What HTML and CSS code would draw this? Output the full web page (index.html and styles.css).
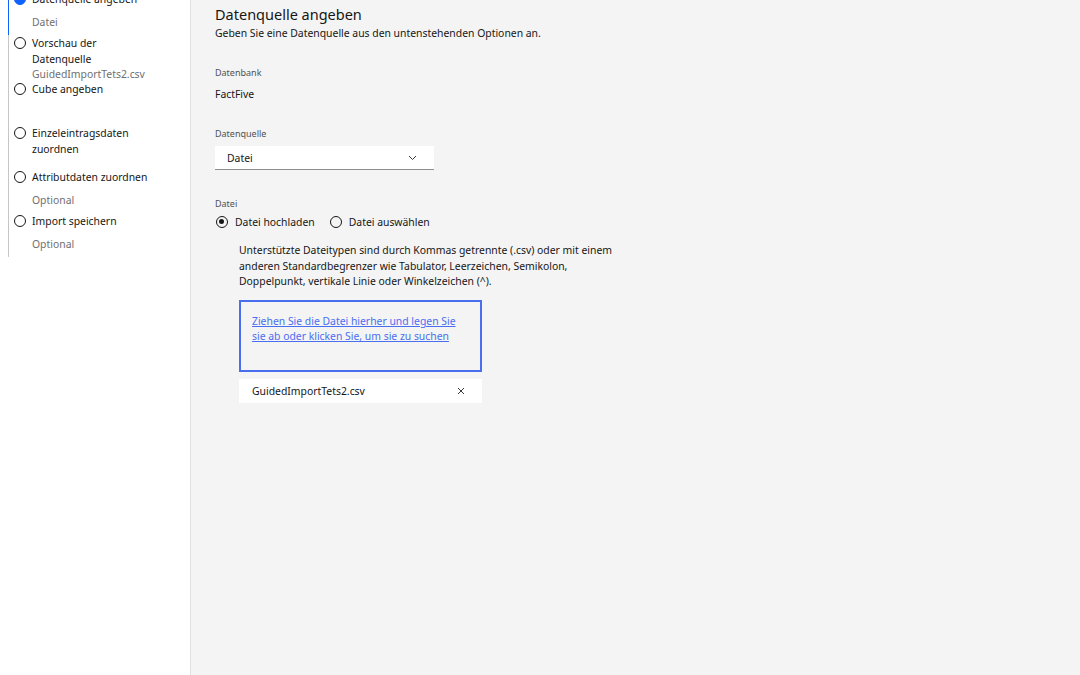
FILE: index.html
```html
<!DOCTYPE html>
<html lang="de">
<head>
<meta charset="utf-8">
<title>Datenquelle angeben</title>
<link rel="stylesheet" href="styles.css">
</head>
<body>
<div class="app">
  <aside class="sidebar">
    <ol class="steps">
      <li class="step step--current">
        <span class="step__icon"></span>
        <div class="step__text">
          <div class="step__label">Datenquelle angeben</div>
          <div class="step__sub">Datei</div>
        </div>
      </li>
      <li class="step">
        <span class="step__icon"></span>
        <div class="step__text">
          <div class="step__label">Vorschau der<br>Datenquelle</div>
          <div class="step__sub step__sub--tight">GuidedImportTets2.csv</div>
        </div>
      </li>
      <li class="step">
        <span class="step__icon"></span>
        <div class="step__text">
          <div class="step__label">Cube angeben</div>
        </div>
      </li>
      <li class="step">
        <span class="step__icon"></span>
        <div class="step__text">
          <div class="step__label">Einzeleintragsdaten<br>zuordnen</div>
        </div>
      </li>
      <li class="step">
        <span class="step__icon"></span>
        <div class="step__text">
          <div class="step__label">Attributdaten zuordnen</div>
          <div class="step__sub">Optional</div>
        </div>
      </li>
      <li class="step">
        <span class="step__icon"></span>
        <div class="step__text">
          <div class="step__label">Import speichern</div>
          <div class="step__sub">Optional</div>
        </div>
      </li>
    </ol>
  </aside>
  <main class="main">
    <h1 class="title">Datenquelle angeben</h1>
    <p class="subtitle">Geben Sie eine Datenquelle aus den untenstehenden Optionen an.</p>

    <div class="field field--first">
      <div class="field__label">Datenbank</div>
      <div class="field__value">FactFive</div>
    </div>

    <div class="field">
      <div class="field__label">Datenquelle</div>
      <div class="select">
        <span>Datei</span>
        <svg class="select__chevron" width="9" height="6" viewBox="0 0 9 6"><path d="M1 1 L4.5 4.5 L8 1" fill="none" stroke="#393939" stroke-width="1"/></svg>
      </div>
    </div>

    <div class="field field--file">
      <div class="field__label">Datei</div>
      <div class="radios">
        <label class="radio radio--checked"><span class="radio__circle"></span>Datei hochladen</label>
        <label class="radio"><span class="radio__circle"></span>Datei auswählen</label>
      </div>
      <div class="upload">
        <p class="upload__desc">Unterstützte Dateitypen sind durch Kommas getrennte (.csv) oder mit einem anderen Standardbegrenzer wie Tabulator, Leerzeichen, Semikolon, Doppelpunkt, vertikale Linie oder Winkelzeichen (^).</p>
        <div class="dropzone">
          <a class="dropzone__link" href="#">Ziehen Sie die Datei hierher und legen Sie sie ab oder klicken Sie, um sie zu suchen</a>
        </div>
        <div class="file-item">
          <span>GuidedImportTets2.csv</span>
          <svg class="file-item__close" width="8" height="8" viewBox="0 0 8 8"><path d="M1 1 L7 7 M7 1 L1 7" stroke="#393939" stroke-width="1"/></svg>
        </div>
      </div>
    </div>
  </main>
</div>
</body>
</html>
```

FILE: styles.css
```css
* { box-sizing: border-box; }
html, body { margin: 0; padding: 0; height: 100%; }
body {
  font-family: "Noto Sans", "Open Sans", sans-serif;
  font-size: 10.4px;
  color: #161616;
  background: #f4f4f4;
  overflow: hidden;
}
.app {
  display: flex;
  height: 675px;
}
.sidebar {
  width: 191px;
  flex: none;
  background: #ffffff;
  border-right: 1px solid #e0e0e0;
}
.steps {
  list-style: none;
  margin: -9px 0 0 8px;
  padding: 0;
}
.step {
  display: flex;
  min-height: 44px;
  border-left: 1px solid #c6c6c6;
  padding-left: 5px;
}
.step--current { border-left-color: #0f62fe; }
.step__icon {
  width: 12px;
  height: 12px;
  border: 1.3px solid #161616;
  border-radius: 50%;
  margin-top: 2px;
  flex: none;
}
.step--current .step__icon {
  background: #0f62fe;
  border-color: #0f62fe;
}
.step__text {
  margin-left: 6px;
}
.step__label {
  line-height: 16px;
  color: #161616;
}
.step__sub {
  line-height: 16px;
  color: #6f6f6f;
  margin-top: 7px;
}
.step__sub--tight {
  margin-top: 0;
  line-height: 14px;
}

.main {
  flex: 1;
  padding: 4px 24px 0 24px;
}
.title {
  font-size: 14.5px;
  font-weight: 400;
  line-height: 20px;
  margin: 0;
}
.subtitle {
  margin: 1px 0 0;
  line-height: 16px;
}
.field { margin-top: 24px; }
.field--first { margin-top: 24px; }
.field--file { margin-top: 26px; }
.field__label {
  font-size: 9px;
  line-height: 16px;
  color: #525252;
}
.field__value {
  margin-top: 5px;
  line-height: 16px;
}
.select {
  margin-top: 4px;
  width: 219px;
  height: 24px;
  background: #ffffff;
  border-bottom: 1px solid #8d8d8d;
  display: flex;
  align-items: center;
  justify-content: space-between;
  padding: 0 17px 0 12px;
}
.select__chevron { display: block; }
.radios {
  margin-top: 2px;
  display: flex;
  gap: 14px;
  line-height: 16px;
}
.radio {
  display: flex;
  align-items: center;
  gap: 7px;
}
.radio__circle {
  width: 12px;
  height: 12px;
  border: 1.3px solid #161616;
  border-radius: 50%;
  position: relative;
  margin-left: 1px;
}
.radio--checked .radio__circle::after {
  content: "";
  position: absolute;
  left: 2.2px;
  top: 2.2px;
  width: 5px;
  height: 5px;
  border-radius: 50%;
  background: #161616;
}
.upload {
  margin-left: 24px;
}
.upload__desc {
  margin: 13px 0 0;
  width: 380px;
  line-height: 15.6px;
}
.dropzone {
  margin-top: 10px;
  width: 243px;
  height: 72px;
  border: 2px solid #4a6ef0;
  padding: 12px 11px 0 11px;
  line-height: 15.5px;
}
.dropzone__link {
  color: #4a6ef0;
  text-decoration: underline;
}
.file-item {
  margin-top: 7px;
  width: 243px;
  height: 24px;
  background: #ffffff;
  display: flex;
  align-items: center;
  justify-content: space-between;
  padding: 0 17px 0 13px;
}
.file-item__close { display: block; }
```
